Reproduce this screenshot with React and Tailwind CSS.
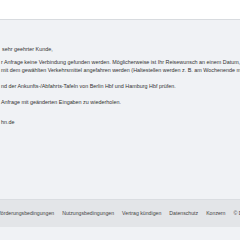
import React from 'react';

const links = ['Beförderungsbedingungen', 'Nutzungsbedingungen', 'Vertrag kündigen', 'Datenschutz', 'Konzern', '© DB Vertrieb GmbH'];

const App = () => {
  return (
    <div className="w-[240px] h-[240px] overflow-hidden flex flex-col bg-[#f0f2f5] text-[#333] font-['Liberation_Sans',Arial,sans-serif]">
      {/* Header */}
      <div className="h-[20px] shrink-0 bg-white border-b border-[#d8dbdf]" />

      {/* Message */}
      <div className="h-[179px] shrink-0 pt-[25px] pl-[1px] text-[5.4px] leading-[8px] whitespace-nowrap overflow-hidden">
        <div className="pl-[1px]">sehr geehrter Kunde,</div>
        <div className="mt-[5px]">
          <div>r Anfrage keine Verbindung gefunden werden. Möglicherweise ist Ihr Reisewunsch an einem Datum, an dem</div>
          <div>mit dem gewählten Verkehrsmittel angefahren werden (Haltestellen werden z. B. am Wochenende manchmal nicht bedient).</div>
        </div>
        <div className="mt-[8px]">nd der Ankunfts-/Abfahrts-Tafeln von Berlin Hbf und Hamburg Hbf prüfen.</div>
        <div className="mt-[8px]">Anfrage mit geänderten Eingaben zu wiederholen.</div>
        <div className="mt-[12px]">hn.de</div>
      </div>

      {/* Footer */}
      <div className="h-[28px] shrink-0 bg-[#e3e5e8] border-t border-[#dadde1] flex items-center gap-[8px] -ml-[7px] text-[5.2px] text-[#444] whitespace-nowrap">
        {links.map((l) => (
          <span key={l}>{l}</span>
        ))}
      </div>
      <div className="flex-1 bg-[#f0f2f5]" />
    </div>
  );
};

export default App;
